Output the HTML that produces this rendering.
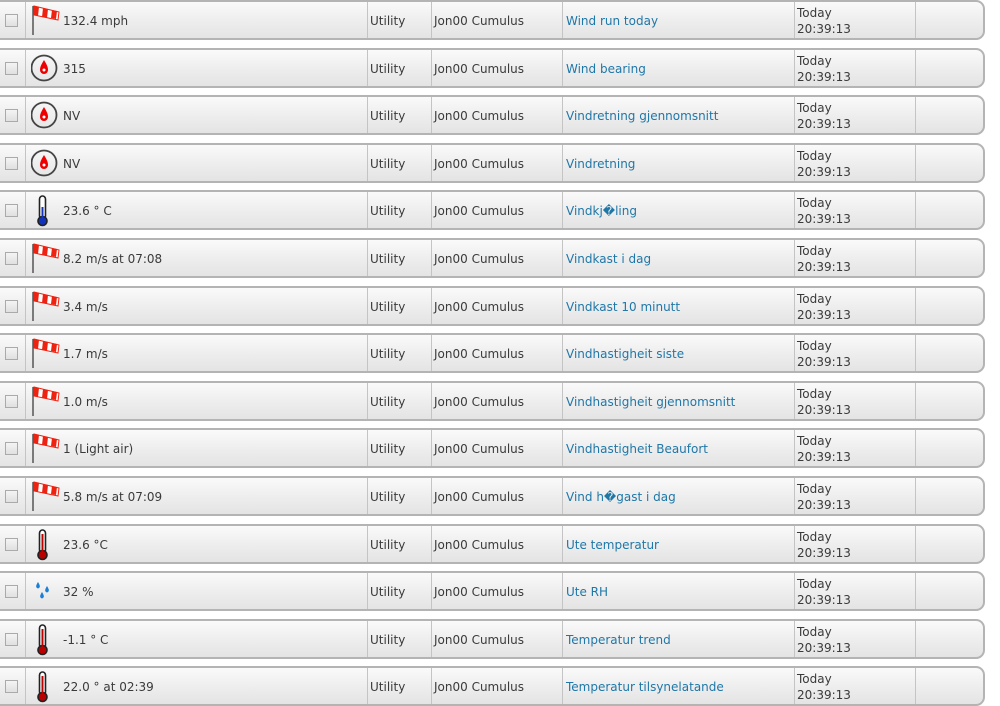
<!DOCTYPE html>
<html><head><meta charset="utf-8"><style>
body{margin:0;width:1000px;height:705px;overflow:hidden;background:#fff;font-family:"DejaVu Sans","Liberation Sans",sans-serif;font-size:12px;color:#3a3a3a;position:relative}
.r{position:absolute;left:-11px;width:992px;height:36px;border:2px solid #b4b4b4;border-radius:9px;background:linear-gradient(#fafafa,#ececec 60%,#e4e4e4)}
.c{position:absolute;top:0;height:36px;border-left:1px solid #c4c4c4}
.t{position:absolute;top:12px;white-space:nowrap}
.cb{position:absolute;left:14px;top:12px;width:11px;height:11px;border:1px solid #aaa;background:linear-gradient(#f4f4f4,#e0e0e0)}
.ic{position:absolute;top:1px}
.l{color:#1f77a8}
.d{position:absolute;top:3px;line-height:16px}
</style></head><body>
<svg width="0" height="0" style="position:absolute"><defs>
<g id="sock"><line x1="2" y1="3" x2="2" y2="32" stroke="#555" stroke-width="1.5"/><path d="M3 3 L28 9 L27 17 L3 12Z" fill="#fff" stroke="#e21" stroke-width="1"/><path d="M3 3 L8 4 L7 13 L3 12Z M12 5 L17 6 L16 15 L11 14Z M21 7 L26 8 L25 16 L20 15Z" fill="#e21"/></g>
<g id="comp"><circle cx="13" cy="17" r="12.5" fill="none" stroke="#444" stroke-width="1.8"/><path d="M13 9 C16 14 17 16 17 19 A4 4 0 0 1 9 19 C9 16 10 14 13 9Z" fill="#e00"/><circle cx="13" cy="19" r="1.5" fill="#fff"/></g>
<g id="th"><rect x="9.5" y="3" width="6" height="23" rx="3" fill="#fff" stroke="#222" stroke-width="1.6"/><circle cx="12.5" cy="28" r="4.5" fill="#b00" stroke="#222" stroke-width="1.6"/><rect x="11.5" y="7" width="2" height="19" fill="#b00"/></g>
<g id="thb"><rect x="9.5" y="3" width="6" height="23" rx="3" fill="#fff" stroke="#222" stroke-width="1.6"/><circle cx="12.5" cy="28" r="4.5" fill="#1133bb" stroke="#222" stroke-width="1.6"/><rect x="11.5" y="14" width="2" height="12" fill="#1133bb"/></g>
<g id="drop"><path d="M8 8 C10.5 12 10.5 13.5 8 14.5 C5.5 13.5 5.5 12 8 8Z M17 12 C19.5 16 19.5 17.5 17 18.5 C14.5 17.5 14.5 16 17 12Z M12 18 C14.5 22 14.5 23.5 12 24.5 C9.5 23.5 9.5 22 12 18Z" fill="#1c7fd6"/></g>
</defs></svg>

<div id="rows"></div>
<script>
var R=[["sock","132.4 mph","Wind run today"],["comp","315","Wind bearing"],["comp","NV","Vindretning gjennomsnitt"],["comp","NV","Vindretning"],["thb","23.6 ° C","Vindkj\uFFFDling"],["sock","8.2 m/s at 07:08","Vindkast i dag"],["sock","3.4 m/s","Vindkast 10 minutt"],["sock","1.7 m/s","Vindhastigheit siste"],["sock","1.0 m/s","Vindhastigheit gjennomsnitt"],["sock","1 (Light air)","Vindhastigheit Beaufort"],["sock","5.8 m/s at 07:09","Vind h\uFFFDgast i dag"],["th","23.6 °C","Ute temperatur"],["drop","32 %","Ute RH"],["th","-1.1 ° C","Temperatur trend"],["th","22.0 ° at 02:39","Temperatur tilsynelatande"]];
var h="";
R.forEach(function(r,i){var top=Math.round(i*47.6);
var il = r[0]=="sock"?40:(r[0]=="comp"?40:(r[0]=="drop"?39:39));
h+='<div class="r" style="top:'+top+'px"><div class="cb"></div>'+
'<div class="c" style="left:34px"></div><div class="c" style="left:376px"></div><div class="c" style="left:440px"></div><div class="c" style="left:571px"></div><div class="c" style="left:803px"></div><div class="c" style="left:924px"></div>'+
'<svg class="ic" style="left:'+il+'px" width="32" height="34"><use href="#'+r[0]+'"/></svg>'+
'<div class="t" style="left:72px">'+r[1]+'</div><div class="t" style="left:379px">Utility</div><div class="t" style="left:443px">Jon00 Cumulus</div><div class="t l" style="left:575px">'+r[2]+'</div>'+
'<div class="d" style="left:806px">Today<br>20:39:13</div></div>';});
document.getElementById("rows").innerHTML=h;
</script>
</body></html>
